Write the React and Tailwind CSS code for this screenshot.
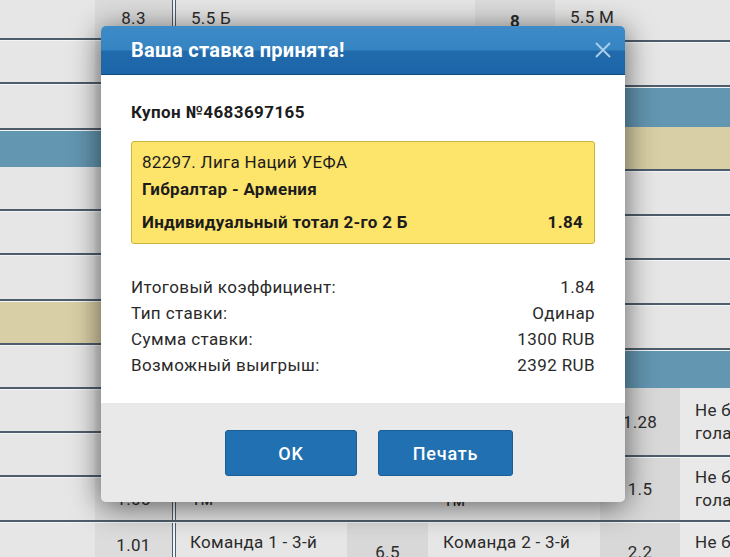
import React from 'react';

// Background betting table (mostly covered by the modal)
const leftRows = [
  { h: 'h-[38px]', num: '8.3', text: '5.5 Б', pos: 'items-end pb-[10px]', line: true },
  { h: 'h-[41px]', line: true },
  { h: 'h-[43px]', line: true },
  { h: 'h-[36px]', band: 'bg-[#6396b1]' },
  { h: 'h-[42px]', line: true },
  { h: 'h-[41px]', line: true },
  { h: 'h-[43px]', line: true },
  { h: 'h-[41px]', band: 'bg-[#d9cfa6]', line: true },
  { h: 'h-[41px]', line: true },
  { h: 'h-[41px]', line: true },
  { h: 'h-[41px]', line: true },
  { h: 'h-[42px]', num: '1.05', text: 'Тм', pos: 'items-center', line: true },
];

const rightRows = [
  { h: 'h-[40px]', top: true, line: true },
  { h: 'h-[42px]', line: true },
  { h: 'h-[39px]', band: 'bg-[#6396b1]' },
  { h: 'h-[42px]', band: 'bg-[#d9cfa6]', line: true },
  { h: 'h-[42px]', line: true },
  { h: 'h-[41px]', line: true },
  { h: 'h-[42px]', line: true },
  { h: 'h-[42px]', line: true },
  { h: 'h-[37px]', band: 'bg-[#6396b1]' },
  { h: 'h-[67px]', odd: '1.28', line: true },
  { h: 'h-[62px]', odd: '1.5', mid: 'Тм', line: true },
];

const Line = () => <div className="h-[3px] border-t-2 border-[#4e5d6b] bg-[#f3f5f7]" />;

const DoubleBar = () => (
  <div className="w-[4px] shrink-0 self-stretch border-x border-[#4e5d6b] bg-[#f3f5f7]" />
);

const LeftRow = ({ row }) => (
  <>
    {row.band ? (
      <div className={`${row.h} ${row.band}`} />
    ) : (
      <div className={`${row.h} flex`}>
        <div className="w-[95px] shrink-0 bg-[#e6e6e6]" />
        <div className={`w-[77px] shrink-0 bg-[#dcdcdc] flex justify-center ${row.pos || ''}`}>
          {row.num && <span className="leading-5">{row.num}</span>}
        </div>
        <DoubleBar />
        <div className={`flex-1 min-w-0 bg-[#e6e6e6] flex pl-[15px] ${row.pos || ''}`}>
          {row.text && <span className="leading-5">{row.text}</span>}
        </div>
      </div>
    )}
    {row.line && <Line />}
  </>
);

const RightRow = ({ row }) => {
  let body;
  if (row.band) {
    body = <div className={`${row.h} ${row.band}`} />;
  } else if (row.top) {
    body = (
      <div className={`${row.h} flex`}>
        <div className="w-[75px] shrink-0 bg-[#e6e6e6]" />
        <div className="w-[80px] shrink-0 bg-[#dcdcdc] flex justify-center items-end pb-[9px]">
          <span className="leading-5 font-bold">8</span>
        </div>
        <div className="flex-1 min-w-0 bg-[#e6e6e6] flex items-end pb-[13px] pl-[15px]">
          <span className="leading-5">5.5 М</span>
        </div>
      </div>
    );
  } else if (row.odd) {
    body = (
      <div className={`${row.h} flex`}>
        <div className="w-[200px] shrink-0 bg-[#e6e6e6] flex items-end pb-[10px] pl-[43px]">
          {row.mid && <span className="leading-5">{row.mid}</span>}
        </div>
        <div className="w-[80px] shrink-0 bg-[#d8d8d8] flex items-center justify-center">
          <span className="leading-5">{row.odd}</span>
        </div>
        <div className="flex-1 min-w-0 overflow-hidden bg-[#e9e9e9] flex flex-col justify-center pl-[15px] leading-[23px] whitespace-nowrap">
          <span>Не будет</span>
          <span>гола</span>
        </div>
      </div>
    );
  } else {
    body = <div className={`${row.h} bg-[#e6e6e6]`} />;
  }
  return (
    <>
      {body}
      {row.line && <Line />}
    </>
  );
};

const details = [
  ['Итоговый коэффициент:', '1.84'],
  ['Тип ставки:', 'Одинар'],
  ['Сумма ставки:', '1300 RUB'],
  ['Возможный выигрыш:', '2392 RUB'],
];

export default function App() {
  return (
    <div className="relative w-[730px] h-[557px] overflow-hidden bg-[#e6e6e6] font-['Roboto',sans-serif] text-[17px] tracking-[0.3px] text-[#2b2b2b]">
      {/* table */}
      <div className="flex flex-col">
        <div className="flex">
          <div className="w-[400px] shrink-0 flex flex-col">
            {leftRows.map((r, i) => (
              <LeftRow key={i} row={r} />
            ))}
          </div>
          <div className="w-[330px] shrink-0 flex flex-col">
            {rightRows.map((r, i) => (
              <RightRow key={i} row={r} />
            ))}
          </div>
        </div>
        <div className="h-[34px] flex whitespace-nowrap">
          <div className="w-[95px] shrink-0 bg-[#e6e6e6]" />
          <div className="w-[77px] shrink-0 bg-[#dcdcdc] flex justify-center pt-[12px]">
            <span className="leading-5">1.01</span>
          </div>
          <DoubleBar />
          <div className="w-[171px] shrink-0 bg-[#e6e6e6] pl-[14px] pt-[9px] leading-5">Команда 1 - 3-й</div>
          <div className="w-[81px] shrink-0 bg-[#d8d8d8] flex justify-center pt-[19px] leading-5">6.5</div>
          <div className="w-[172px] shrink-0 bg-[#e6e6e6] pl-[15px] pt-[9px] leading-5">Команда 2 - 3-й</div>
          <div className="w-[80px] shrink-0 bg-[#d8d8d8] flex justify-center pt-[19px] leading-5">2.2</div>
          <div className="flex-1 min-w-0 overflow-hidden bg-[#e9e9e9] pl-[15px] pt-[9px] leading-5">Не будет</div>
        </div>
      </div>

      {/* modal */}
      <div className="absolute left-[101px] top-[26px] w-[524px] rounded-[5px] shadow-[0_4px_30px_rgba(0,0,0,0.6)]">
        <div className="h-[49px] rounded-t-[5px] border-b border-[#0f4c80] bg-[linear-gradient(to_bottom,#3e8bc8,#3584c2_50%,#216bad_52%,#1c65a8)] flex items-center justify-between pl-[30px] pr-[13px]">
          <h2 className="text-[20px] font-bold text-white tracking-[0.3px]">Ваша ставка принята!</h2>
          <svg width="18" height="18" viewBox="0 0 18 18" className="text-[#a9cdea]">
            <path d="M2 2 L16 16 M16 2 L2 16" stroke="currentColor" strokeWidth="2" fill="none" />
          </svg>
        </div>

        <div className="bg-white px-[30px] pt-[27px] pb-[24px]">
          <div className="font-bold text-[17px] tracking-[0.4px] leading-5 text-[#1c1c1c]">Купон №4683697165</div>

          <div className="mt-[19px] rounded-[3px] border border-[#cbb53f] bg-[#fde46b] pl-[10px] pr-[11px] pt-[10px] pb-[11px] text-[#1c1c1c]">
            <div className="leading-5">82297. Лига Наций УЕФА</div>
            <div className="leading-5 mt-[7px] font-bold">Гибралтар - Армения</div>
            <div className="leading-5 mt-[13px] font-bold flex justify-between">
              <span>Индивидуальный тотал 2-го 2 Б</span>
              <span>1.84</span>
            </div>
          </div>

          <div className="mt-[31px] text-[#2a2a2a] tracking-[0.4px]">
            {details.map(([k, v]) => (
              <div key={k} className="h-[26px] flex items-center justify-between">
                <span>{k}</span>
                <span>{v}</span>
              </div>
            ))}
          </div>
        </div>

        <div className="h-[99px] rounded-b-[5px] bg-[#e9e9e9] flex justify-center items-start pt-[27px] pl-[12px] gap-[21px]">
          <button className="w-[132px] h-[46px] rounded-[3px] border border-[#1a5e98] bg-[#2070b2] text-white text-[18px] tracking-[0.8px] font-medium">
            OK
          </button>
          <button className="w-[135px] h-[46px] rounded-[3px] border border-[#1a5e98] bg-[#2070b2] text-white text-[18px] tracking-[0.8px] font-medium">
            Печать
          </button>
        </div>
      </div>
    </div>
  );
}
